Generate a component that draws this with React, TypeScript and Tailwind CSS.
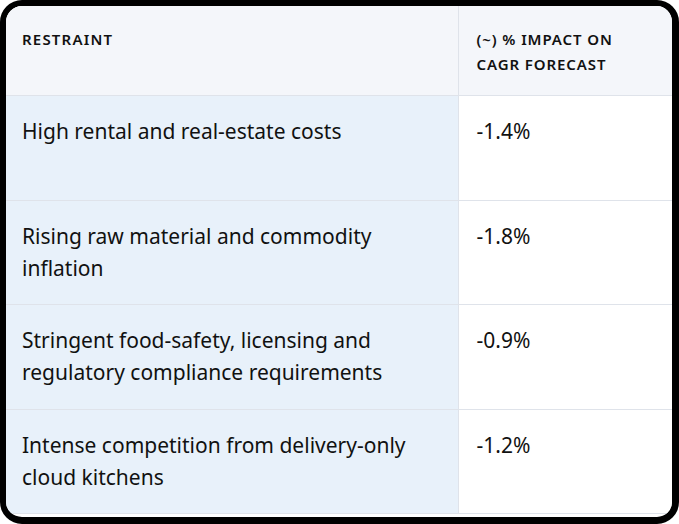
const rows = [
  { restraint: 'High rental and real-estate costs', impact: '-1.4%', h: 'h-[105px]' },
  { restraint: 'Rising raw material and commodity inflation', impact: '-1.8%', h: 'h-[104px]' },
  { restraint: 'Stringent food-safety, licensing and regulatory compliance requirements', impact: '-0.9%', h: 'h-[105px]' },
  { restraint: 'Intense competition from delivery-only cloud kitchens', impact: '-1.2%', h: 'h-[104px]' },
];

export default function App() {
  return (
    <div className="w-[679px] h-[524px] bg-white">
      <div
        className="w-full h-full border-black border-t-[6px] border-l-[6px] border-r-[7px] border-b-[7px] rounded-[22px] overflow-hidden bg-white"
        style={{ fontFamily: '"Noto Sans", "Open Sans", sans-serif' }}
      >
        <table className="w-full border-collapse text-[#111111]">
          <thead>
            <tr className="h-[89px] bg-[#f4f6fa] border-b border-[#dfe3ea]">
              <th className="w-[452px] align-top text-left pt-[21px] px-4 text-[15px] leading-[25px] font-semibold tracking-[0.08em] uppercase border-r border-[#dfe3ea]">
                Restraint
              </th>
              <th className="align-top text-left pt-[21px] px-[18px] text-[15px] leading-[25px] font-semibold tracking-[0.06em] uppercase">
                (~) % Impact on CAGR forecast
              </th>
            </tr>
          </thead>
          <tbody>
            {rows.map((r) => (
              <tr key={r.impact} className={`${r.h} border-b border-[#dfe3ea]`}>
                <td className="align-top bg-[#e8f1fa] pt-[19px] px-4 text-[21px] leading-[32px] border-r border-[#dfe3ea]">
                  {r.restraint}
                </td>
                <td className="align-top bg-white pt-[19px] px-[18px] text-[21px] leading-[32px]">
                  {r.impact}
                </td>
              </tr>
            ))}
          </tbody>
        </table>
      </div>
    </div>
  );
}
